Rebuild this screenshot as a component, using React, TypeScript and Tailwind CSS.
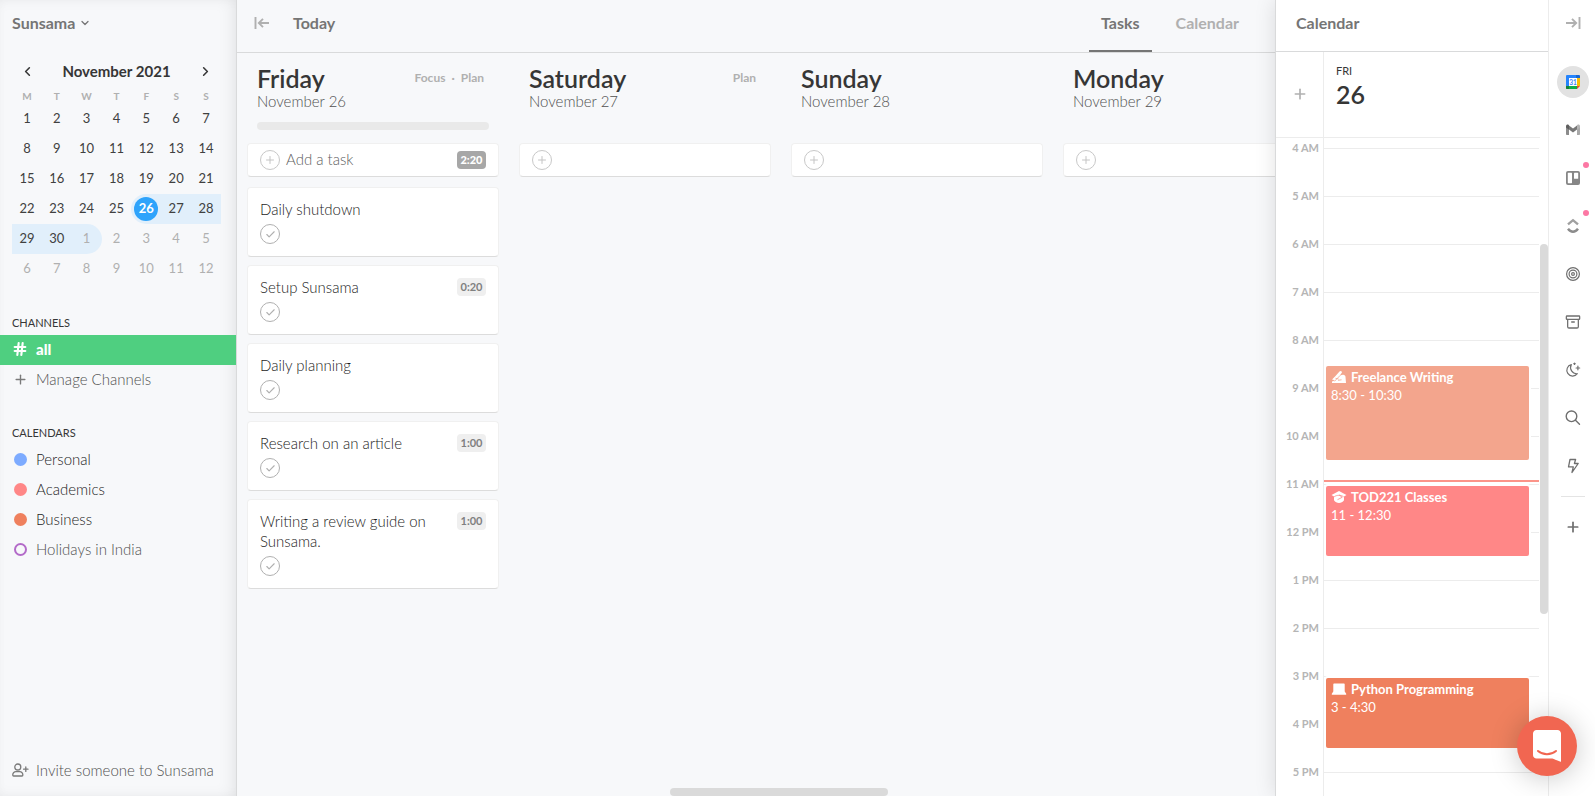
import { useState } from 'react';
import type { ReactNode } from 'react';
import { Archive, Check, ChevronDown, ChevronLeft, ChevronRight, Hash, Plus, Search } from 'lucide-react';

const WEEKS = [
  [1, 2, 3, 4, 5, 6, 7],
  [8, 9, 10, 11, 12, 13, 14],
  [15, 16, 17, 18, 19, 20, 21],
  [22, 23, 24, 25, 26, 27, 28],
  [29, 30, 1, 2, 3, 4, 5],
  [6, 7, 8, 9, 10, 11, 12],
];

const CALENDARS = [
  { name: 'Personal', dot: 'bg-[#7dabff] border-[#7dabff]', text: 'text-[#1c1c1c]' },
  { name: 'Academics', dot: 'bg-[#ff8787] border-[#ff8787]', text: 'text-[#1c1c1c]' },
  { name: 'Business', dot: 'bg-[#ef805e] border-[#ef805e]', text: 'text-[#1c1c1c]' },
  { name: 'Holidays in India', dot: 'border-[#b36bc9]', text: 'text-[#505050]' },
];

const TASKS = [
  { title: 'Daily shutdown', time: '' },
  { title: 'Setup Sunsama', time: '0:20' },
  { title: 'Daily planning', time: '' },
  { title: 'Research on an article', time: '1:00' },
  { title: 'Writing a review guide on Sunsama.', time: '1:00' },
];

const HOURS = ['4 AM', '5 AM', '6 AM', '7 AM', '8 AM', '9 AM', '10 AM', '11 AM', '12 PM', '1 PM', '2 PM', '3 PM', '4 PM', '5 PM'];
const HOUR_HEIGHT = 48;
const FIRST_HOUR = 4;

function ArrowToLine({ flip }: { flip?: boolean }) {
  return (
    <svg width="16" height="14" viewBox="0 0 16 14" fill="none" stroke="#b0b0b0" strokeWidth="1.9" className={flip ? 'rotate-180' : ''}>
      <path d="M1.5 1v12M15 7H5.5M9 2.8 4.8 7 9 11.2" />
    </svg>
  );
}

function GoogleCalendarIcon() {
  return (
    <svg width="16" height="16" viewBox="0 0 16 16">
      <path d="M2 1h9v3H4v8H1V2a1 1 0 0 1 1-1Z" fill="#2684fc" />
      <path d="M11 1h3a1 1 0 0 1 1 1v2h-4Z" fill="#1967d2" />
      <path d="M12 4h3v8h-3Z" fill="#fbbc04" />
      <path d="M1 12h11v3H2a1 1 0 0 1-1-1Z" fill="#10ac47" />
      <path d="M1 12h3v3H2a1 1 0 0 1-1-1Z" fill="#188038" />
      <path d="M12 12h3l-3 3Z" fill="#ea4335" />
      <path d="M4 4h8v8H4Z" fill="#fff" />
      <text x="8" y="10.5" fontSize="6.5" fontWeight="700" textAnchor="middle" fill="#4285f4">31</text>
    </svg>
  );
}

function GmailIcon() {
  return (
    <svg width="16" height="12" viewBox="0 0 16 12">
      <path d="M1 2v8.2c0 .5.4.8.8.8H4V5Z" fill="#8c8c8c" />
      <path d="M12 5v6h2.2c.4 0 .8-.3.8-.8V2Z" fill="#a8a8a8" />
      <path d="M4 1.5 8 4.6l4-3.1v4L8 8.6 4 5.5Z" fill="#777" />
      <path d="M1 2.2C1 .8 2.6 0 3.7.9L4 1.2v4.5L1 3.6Z" fill="#5e5e5e" />
      <path d="M15 2.2c0-1.4-1.6-2.2-2.7-1.3l-.3.3v4.5l3-2.1Z" fill="#b4b4b4" />
    </svg>
  );
}

function TrelloIcon() {
  return (
    <svg width="16" height="16" viewBox="0 0 16 16">
      <rect x="1" y="1" width="14" height="14" rx="2" fill="#868686" />
      <rect x="2.8" y="2.8" width="4.2" height="10.4" rx="0.6" fill="#fff" />
      <rect x="9" y="2.8" width="4.2" height="6" rx="0.6" fill="#fff" />
    </svg>
  );
}

function ClickUpIcon() {
  return (
    <svg width="14" height="16" viewBox="0 0 14 16" fill="none" strokeWidth="2.4">
      <path d="M2 6.4 7 2.2l5 4.2" stroke="#a0a0a0" />
      <path d="M2 10.8c2.700 3.900 7.300 3.900 10 0" stroke="#8c8c8c" />
    </svg>
  );
}

function TargetIcon() {
  return (
    <svg width="16" height="16" viewBox="0 0 16 16" fill="none" stroke="#6f6f6f" strokeWidth="1.2">
      <circle cx="8" cy="8" r="6.4" />
      <circle cx="8" cy="8" r="3.9" />
      <circle cx="8" cy="8" r="1.4" />
    </svg>
  );
}

function MoonIcon() {
  return (
    <svg width="16" height="16" viewBox="0 0 16 16" fill="none" stroke="#6f6f6f" strokeWidth="1.2" strokeLinecap="round" strokeLinejoin="round">
      <path d="M6.3 2.6a5.8 5.8 0 1 0 6 9.1A6.2 6.2 0 0 1 6.3 2.6Z" />
      <path d="M12.9 4.2v3.6M11.1 6h3.6M9.5 1v1.4M8.8 1.7h1.4" />
    </svg>
  );
}

function SearchIcon() {
  return (
    <svg width="16" height="16" viewBox="0 0 16 16" fill="none" stroke="#6f6f6f" strokeWidth="1.4" strokeLinecap="round">
      <circle cx="6.5" cy="6.3" r="5.3" />
      <path d="m10.500 10.300 4 4" />
    </svg>
  );
}

function LightningIcon() {
  return (
    <svg width="14" height="16" viewBox="0 0 14 16" fill="none" stroke="#6f6f6f" strokeWidth="1.3" strokeLinejoin="round">
      <path d="M4 1.5h5.6L8.4 5.5h3.8L6 14.5l1.3-5.6H2.5Z" />
    </svg>
  );
}

function InviteIcon() {
  return (
    <svg width="17" height="14" viewBox="0 0 17 14" fill="none" stroke="#7a7a7a" strokeWidth="1.3" strokeLinecap="round" strokeLinejoin="round">
      <circle cx="5.8" cy="4" r="3" />
      <path d="M4 8.6h3.6a3 3 0 0 1 3.2 3v.6c0 .5-.3.8-.8.8H1.6c-.5 0-.8-.3-.8-.8v-.6a3 3 0 0 1 3.2-3Z" />
      <path d="M13.8 4v4.4M11.6 6.2H16" />
    </svg>
  );
}

function WritingIcon() {
  return (
    <svg width="16" height="14" viewBox="0 0 16 14" fill="#fff">
      <path d="M1 9.5 4.5 6l4-4.6c.6-.7 1.7-.7 2.2 0 .4.6.3 1.2-.1 1.7L8.8 5.4l3-.6c1.6-.2 2.7.9 2.7 2.2L15 13H1v-1.6l3-1.2Z" />
      <path d="m3.4 11.4 5.8-6M7 10.3l3.6-.5M4.5 8.3 7.6 9" stroke="#f3a58d" strokeWidth=".8" fill="none" />
    </svg>
  );
}

function GraduationIcon() {
  return (
    <svg width="16" height="14" viewBox="0 0 16 14" fill="#fff">
      <path d="M8 1 15.5 5 13 6.6v3.6C11.8 12 10 13 8 13s-3.8-1-5-2.8V6.6L.5 5Z" />
      <path d="M3.2 6.8c2.6-2 6.8-2 9.4 0M8 4.8l3.2 2.5L6.5 9.7" stroke="#ff8787" strokeWidth=".8" fill="none" />
    </svg>
  );
}

function LaptopIcon() {
  return (
    <svg width="16" height="14" viewBox="0 0 16 14" fill="#fff">
      <path d="M3 1.5h10a.7.7 0 0 1 .7.7V9.500l1.500 2.300c.2.600 0 1-.6 1H1.400c-.6 0-.8-.4-.6-1L2.300 9.500V2.200a.7.700 0 0 1 .7-.7Z" />
    </svg>
  );
}

const EVENTS = [
  { title: 'Freelance Writing', range: '8:30 - 10:30', start: 8.5, hours: 2, color: 'bg-[#f3a58d]', icon: <WritingIcon /> },
  { title: 'TOD221 Classes', range: '11 - 12:30', start: 11, hours: 1.5, color: 'bg-[#ff8787]', icon: <GraduationIcon /> },
  { title: 'Python Programming', range: '3 - 4:30', start: 15, hours: 1.5, color: 'bg-[#ef805e]', icon: <LaptopIcon /> },
];

function dayCell(day: number, week: number) {
  const otherMonth = (week === 4 && day < 10) || week === 5;
  const selected = week === 3 && day === 26;
  const inRange = (week === 3 && day > 26) || (week === 4 && day > 10);
  const lastInRange = week === 4 && day === 1;
  let cls = 'h-[30px] p-0 text-center';
  if (otherMonth) cls += ' text-[#b0b0b0]';
  if (inRange) cls += ' bg-[#e1effb]';
  if (selected) cls += ' bg-[#e1effb] rounded-l-full';
  if (lastInRange) cls += ' bg-[#e1effb] rounded-r-full';
  return (
    <td key={day} className={cls}>
      <button className={selected ? 'size-6 rounded-full bg-[#2ea3fb] font-bold text-white' : 'size-6'}>{day}</button>
    </td>
  );
}

function Sidebar() {
  return (
    <aside className="flex w-[237px] shrink-0 flex-col border-r border-[#d9dadb] bg-[#f7f8fa] shadow-[inset_-6px_0_18px_-6px_rgba(0,0,0,0.10),inset_0_0_10px_rgba(0,0,0,0.02)]">
      <button className="flex h-[46px] items-center gap-1 px-3 text-base font-bold text-[#757575]">
        Sunsama
        <ChevronDown size={12} strokeWidth={2.5} />
      </button>
      <div className="pt-3 pr-[15px] pl-3">
        <div className="flex h-[26px] items-center justify-between px-2 text-[15px] font-bold text-[#363636]">
          <button aria-label="Previous month">
            <ChevronLeft size={15} strokeWidth={2.5} />
          </button>
          November 2021
          <button aria-label="Next month">
            <ChevronRight size={15} strokeWidth={2.5} />
          </button>
        </div>
        <table className="w-full table-fixed border-collapse text-[13px] text-[#404040]">
          <thead>
            <tr className="text-[10px] text-[#b0b0b0]">
              {['M', 'T', 'W', 'T', 'F', 'S', 'S'].map((d, i) => (
                <th key={i} className="h-5 p-0 pt-1 font-bold">
                  {d}
                </th>
              ))}
            </tr>
          </thead>
          <tbody>
            {WEEKS.map((week, i) => (
              <tr key={i}>{week.map((day) => dayCell(day, i))}</tr>
            ))}
          </tbody>
        </table>
      </div>

      <h2 className="mt-[30px] flex h-[21px] items-center px-3 pb-2.5 pt-2 text-[11px] text-[#363636]">CHANNELS</h2>
      <button className="flex h-[30px] items-center bg-[#4fcf80] px-3 pb-0.5 text-[15px] font-black text-white">
        <span className="w-6">
          <Hash size={16} strokeWidth={3.2} />
        </span>
        all
      </button>
      <button className="flex h-[30px] items-center px-3 pb-0.5 text-[15px] font-light text-[#505050]">
        <span className="w-6 pl-px text-[#7a7a7a]">
          <Plus size={15} strokeWidth={2.2} />
        </span>
        Manage Channels
      </button>

      <h2 className="mt-[30px] mb-[3px] flex h-4 items-center px-3 text-[11px] text-[#363636]">CALENDARS</h2>
      {CALENDARS.map((cal) => (
        <button key={cal.name} className={`flex h-[30px] items-center px-3 text-[15px] font-light ${cal.text}`}>
          <span className="w-6 pl-0.5">
            <span className={`block size-[13px] rounded-full border-2 ${cal.dot}`} />
          </span>
          {cal.name}
        </button>
      ))}

      <button className="mt-auto mb-[11px] flex h-[30px] items-center px-3 text-[15px] font-light text-[#505050]">
        <span className="w-6">
          <InviteIcon />
        </span>
        Invite someone to Sunsama
      </button>
    </aside>
  );
}

function AddTask({ label, total }: { label?: string; total?: string }) {
  return (
    <button
      className="flex h-[34px] w-full items-center rounded border border-[#f0f0f0] border-b-[#dcdcdc] bg-white px-3 text-[15px] font-light text-[#606060]"
      aria-label="Add a task"
    >
      <span className="flex size-5 items-center justify-center rounded-full border border-[#c8c8c8] text-[#c4c4c4]">
        <Plus size={12} />
      </span>
      {label && <span className="ml-1.5 pb-0.5">{label}</span>}
      {total && <span className="ml-auto flex h-[18px] w-[29px] items-center justify-center rounded bg-[#a7a7a7] text-[11px] font-black text-white">{total}</span>}
    </button>
  );
}

function DayColumn({ day, date, actions, children }: { day: string; date: string; actions?: string[]; children: ReactNode }) {
  return (
    <section className="w-[252px] shrink-0">
      <div className="h-[90px] px-2.5 pt-3">
        <div className="flex items-center justify-between pr-[5px]">
          <h1 className="text-[25px] leading-[26px] font-semibold text-[#363636]">{day}</h1>
          {actions && (
            <div className="flex gap-1.5 text-xs font-bold text-[#b0b0b0]">
              {actions.map((a, i) => (
                <span key={a} className="flex gap-1.5">
                  {i > 0 && <span>·</span>}
                  <button>{a}</button>
                </span>
              ))}
            </div>
          )}
        </div>
        <p className="text-[15px] leading-5 font-light text-[#505050]">{date}</p>
        {day === 'Friday' && <div className="mt-[11px] h-2 rounded-full bg-[#e9e9e9]" />}
      </div>
      {children}
    </section>
  );
}

function Board() {
  const [tab, setTab] = useState('Tasks');
  return (
    <main className="flex min-w-0 flex-1 flex-col overflow-hidden bg-[#f7f8fa]">
      <header className="flex h-[53px] shrink-0 border-b border-[#d9dadb] pr-6 pl-[17px]">
        <div className="flex h-[46px] flex-1 items-center text-base font-bold text-[#757575]">
          <button aria-label="Collapse sidebar">
            <ArrowToLine />
          </button>
          <button className="ml-[23px]">Today</button>
        </div>
        <nav className="flex gap-3 text-base font-bold">
          {['Tasks', 'Calendar'].map((name) => (
            <button
              key={name}
              onClick={() => setTab(name)}
              className={name === tab ? 'border-b-2 border-[#757575] px-3 pb-1 text-[#757575]' : 'border-b-2 border-transparent px-3 pb-1 text-[#b0b0b0]'}
            >
              {name}
            </button>
          ))}
        </nav>
      </header>
      <div className="flex min-h-0 flex-1 gap-5 overflow-hidden pl-2.5">
        <DayColumn day="Friday" date="November 26" actions={['Focus', 'Plan']}>
          <AddTask label="Add a task" total="2:20" />
          <ul className="mt-2.5 flex flex-col gap-2">
            {TASKS.map((task) => (
              <li key={task.title} className="rounded border border-[#f0f0f0] border-b-[#dcdcdc] bg-white px-3 pt-[11px] pb-3">
                <div className="flex justify-between">
                  <h3 className="max-w-[180px] text-[15px] leading-5 font-light text-[#1c1c1c]">{task.title}</h3>
                  {task.time && <span className="mt-px flex h-[18px] w-[29px] items-center justify-center rounded bg-[#efefef] text-[11px] font-bold text-[#808080]">{task.time}</span>}
                </div>
                <button aria-label="Complete task" className="mt-[5px] flex size-5 items-center justify-center rounded-full border border-[#b0b0b0] text-[#b0b0b0]">
                  <Check size={11} strokeWidth={2.5} />
                </button>
              </li>
            ))}
          </ul>
        </DayColumn>
        <DayColumn day="Saturday" date="November 27" actions={['Plan']}>
          <AddTask />
        </DayColumn>
        <DayColumn day="Sunday" date="November 28">
          <AddTask />
        </DayColumn>
        <DayColumn day="Monday" date="November 29">
          <AddTask />
        </DayColumn>
      </div>
      <div className="flex h-2 pl-[41.7%]">
        <div className="w-[36%] rounded-full bg-[#dadada]" />
      </div>
    </main>
  );
}

function CalendarPanel() {
  return (
    <section className="z-10 flex w-[273px] shrink-0 flex-col overflow-hidden border-l border-[#d9dadb] bg-white shadow-[0_0_20px_rgba(0,0,0,0.12)]">
      <header className="flex h-[52px] shrink-0 items-center border-b border-[#d9dadb] px-5 pb-1.5 text-base font-bold text-[#757575]">Calendar</header>
      <div className="mr-2 flex h-[86px] shrink-0 border-b border-[#ececec]">
        <button aria-label="Add event" className="flex w-12 items-center justify-center border-r border-[#ececec] pb-0.5 text-[#b0b0b0]">
          <Plus size={16} strokeWidth={2.5} />
        </button>
        <div className="px-3 pt-3 text-[#363636]">
          <p className="text-[11px] leading-[14px]">FRI</p>
          <p className="mt-[3px] text-[25px] leading-[26px] font-semibold">26</p>
        </div>
      </div>
      <div className="flex min-h-0 flex-1">
        <div className="w-12 overflow-hidden border-r border-[#ececec] pr-1 text-right text-[11px] font-bold text-[#b5b5b5]">
          {HOURS.map((hour) => (
            <div key={hour} className="h-12 leading-5">
              {hour}
            </div>
          ))}
        </div>
        <div className="flex-1 overflow-hidden pt-2.5">
          <div className="relative">
            {HOURS.map((hour) => (
              <div key={hour} className="mr-px h-12 border-t border-[#ececec]" />
            ))}
            {EVENTS.map((ev) => (
              <div
                key={ev.title}
                className={`absolute right-[11px] left-0.5 rounded-xs px-[5px] pt-0.5 text-[13px] leading-[18px] text-white ring-2 ring-white ${ev.color}`}
                style={{ top: (ev.start - FIRST_HOUR) * HOUR_HEIGHT + 2, height: ev.hours * HOUR_HEIGHT - 2 }}
              >
                <p className="flex items-center gap-1 font-bold">
                  {ev.icon}
                  {ev.title}
                </p>
                <p>{ev.range}</p>
              </div>
            ))}
            <div className="absolute right-px left-0 h-0.5 bg-[#fb9489]" style={{ top: 332 }} />
          </div>
        </div>
        <div className="w-2 pt-[106px]">
          <div className="h-[370px] rounded-full bg-[#dadada]" />
        </div>
      </div>
    </section>
  );
}

function RailButton({ label, active, dot, children }: { label: string; active?: boolean; dot?: boolean; children: ReactNode }) {
  return (
    <div className="flex h-12 items-center justify-center">
      <button aria-label={label} className={`relative flex size-8 items-center justify-center rounded-full text-[#6f6f6f] ${active ? 'bg-[#e2e2e2]' : ''}`}>
        {children}
        {dot && <span className="absolute top-0 right-0 size-1.5 rounded-full bg-[#fc78a4]" />}
      </button>
    </div>
  );
}

function Rail() {
  return (
    <aside className="z-10 flex w-[47px] shrink-0 flex-col border-l border-[#ececec] bg-white pl-0.5">
      <button aria-label="Collapse panel" className="flex h-[46px] items-center justify-center">
        <ArrowToLine flip />
      </button>
      <div className="mt-3">
        <RailButton label="Google Calendar" active>
          <GoogleCalendarIcon />
        </RailButton>
        <RailButton label="Gmail">
          <GmailIcon />
        </RailButton>
        <RailButton label="Trello" dot>
          <TrelloIcon />
        </RailButton>
        <RailButton label="ClickUp" dot>
          <ClickUpIcon />
        </RailButton>
        <RailButton label="Objectives">
          <TargetIcon />
        </RailButton>
        <RailButton label="Archive">
          <Archive size={16} strokeWidth={1.9} />
        </RailButton>
        <RailButton label="Do not disturb">
          <MoonIcon />
        </RailButton>
        <RailButton label="Search">
          <SearchIcon />
        </RailButton>
        <RailButton label="Shortcuts">
          <LightningIcon />
        </RailButton>
      </div>
      <hr className="mx-auto mt-1.5 w-6 border-[#e4e4e4]" />
      <button aria-label="Add integration" className="mt-[22px] flex justify-center text-[#6f6f6f]">
        <Plus size={16} strokeWidth={2.6} />
      </button>
    </aside>
  );
}

export default function App() {
  return (
    <div className="flex h-screen overflow-hidden font-[Lato,sans-serif]">
      <Sidebar />
      <Board />
      <CalendarPanel />
      <Rail />
      <button aria-label="Open chat" className="fixed right-[18px] bottom-5 z-20 flex size-[60px] items-center justify-center rounded-full bg-[#f16651] shadow-[0_2px_28px_rgba(0,0,0,0.22)]">
        <svg width="28" height="32" viewBox="0 0 28 32">
          <path d="M28 32s-4.7-1.9-8.7-3.4H3.5c-1.9 0-3.5-1.5-3.5-3.5V3.5C0 1.6 1.6 0 3.5 0h21C26.4 0 28 1.6 28 3.5Z" fill="#fff" />
          <path d="M5 21c5 4.3 13 4.3 18 0" stroke="#f16651" strokeWidth="2" strokeLinecap="round" fill="none" />
        </svg>
      </button>
    </div>
  );
}
